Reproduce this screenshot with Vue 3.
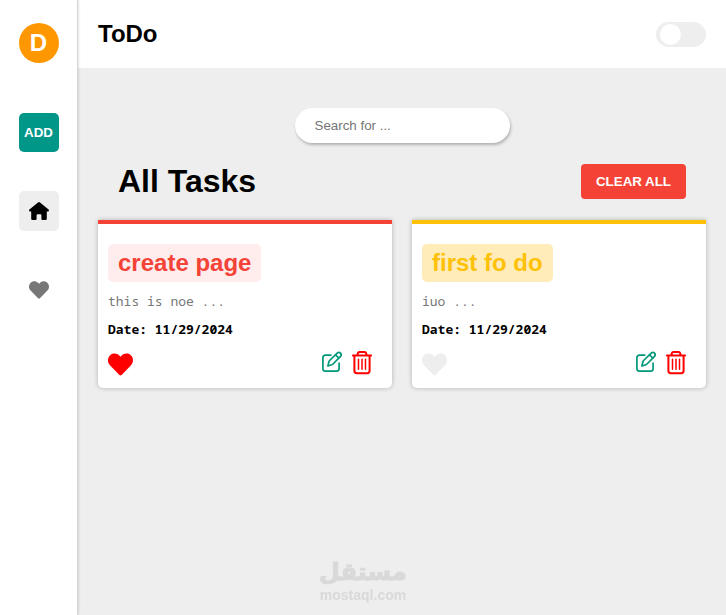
<script setup>
import { ref, computed } from 'vue'

const search = ref('')
const dark = ref(false)
const tasks = ref([
  { id: 1, title: 'create page', text: 'this is noe ...', date: '11/29/2024', tone: 'red', liked: true },
  { id: 2, title: 'first fo do', text: 'iuo ...', date: '11/29/2024', tone: 'amber', liked: false },
])
const shown = computed(() => tasks.value.filter((t) => t.title.includes(search.value)))
const remove = (id) => {
  tasks.value = tasks.value.filter((t) => t.id !== id)
}
const heart =
  'M462.3 62.6C407.5 15.9 326 24.3 275.7 76.2L256 96.5l-19.7-20.3C186.1 24.3 104.5 15.9 49.7 62.6c-62.8 53.6-66.1 149.8-9.9 207.9l193.5 199.8c12.5 12.9 32.8 12.9 45.3 0l193.5-199.8c56.3-58.1 53-154.3-9.8-207.9z'
</script>

<template>
  <div class="page">
    <aside class="sidebar">
      <div class="avatar">D</div>
      <button class="add" type="button">ADD</button>
      <nav class="nav">
        <a class="nav-link active" href="#home" aria-label="Home">
          <svg width="20" height="18" viewBox="0 0 20 18">
            <path d="M9 .5Q10-.3 11 .5L19.6 7.5Q20.2 8.2 19.8 9Q19.4 9.6 18.6 9.6H17.8V16.8Q17.8 18 16.6 18H13.4Q12.4 18 12.4 17V13.2Q12.4 12.2 11.4 12.2H8.6Q7.6 12.2 7.6 13.2V17Q7.6 18 6.6 18H3.4Q2.2 18 2.2 16.8V9.6H1.4Q.6 9.6 .2 9Q-.2 8.2 .4 7.5Z" />
          </svg>
        </a>
        <a class="nav-link" href="#favorites" aria-label="Favorites">
          <svg width="20" height="20" viewBox="0 0 512 512"><path :d="heart" /></svg>
        </a>
      </nav>
    </aside>

    <div class="main">
      <header class="header">
        <h2 class="brand">ToDo</h2>
        <input v-model="dark" class="switch" type="checkbox" role="switch" aria-label="Dark mode" />
      </header>

      <main class="content">
        <input v-model="search" class="search" type="text" placeholder="Search for ..." aria-label="Search tasks" />
        <div class="toolbar">
          <h1 class="heading">All Tasks</h1>
          <button class="clear" type="button" @click="tasks = []">CLEAR ALL</button>
        </div>

        <section class="grid">
          <article v-for="task in shown" :key="task.id" class="card" :class="task.tone">
            <h2 class="title">{{ task.title }}</h2>
            <p class="text">{{ task.text }}</p>
            <p class="date">Date: {{ task.date }}</p>
            <div class="actions">
              <button class="icon like" :class="{ liked: task.liked }" type="button" aria-label="Favorite" @click="task.liked = !task.liked">
                <svg width="25" height="25" viewBox="0 0 512 512"><path :d="heart" /></svg>
              </button>
              <div class="tools">
                <button class="icon edit" type="button" aria-label="Edit">
                  <svg width="21" height="24" viewBox="0 0 21 24">
                    <path d="M8.8 4.1H3.6Q.9 4.1 .9 6.8V17.4Q.9 20.1 3.6 20.1H14.4Q17.1 20.1 17.1 17.4V12.2" />
                    <path d="M5.9 15L6.9 10.7Q7.1 10 7.6 9.5L15.2 2.1Q17 .7 18.5 2.1Q20 3.7 18.5 5.4L11 13Q10.5 13.5 9.8 13.8Z" />
                    <path d="M13.6 3.9L16.7 7" />
                  </svg>
                </button>
                <button class="icon trash" type="button" aria-label="Delete" @click="remove(task.id)">
                  <svg width="20" height="24" viewBox="0 0 20 24">
                    <path d="M.9 4.6H19.1M5.4 4.4Q5.6 1 7.6 1H12.4Q14.4 1 14.6 4.4" />
                    <path d="M2.4 5V19.8Q2.4 22.2 4.8 22.2H15.2Q17.6 22.2 17.6 19.8V5" />
                    <path class="thin" d="M6.5 8.3V18.3M10 8.3V18.3M13.5 8.3V18.3" />
                  </svg>
                </button>
              </div>
            </div>
          </article>
        </section>
      </main>
    </div>

    <div class="watermark">
      <span class="mark-ar" lang="ar">مستقل</span>
      <span class="mark-en">mostaql.com</span>
    </div>
  </div>
</template>

<style>
body {
  margin: 0;
}
</style>

<style scoped>
* {
  box-sizing: border-box;
  margin: 0;
}
.page {
  display: flex;
  min-height: 100vh;
  background: #eee;
  color: #000;
  font-family: "Liberation Sans", Arial, sans-serif;
}
button {
  border: 0;
  padding: 0;
  cursor: pointer;
  font-family: "Liberation Sans", Arial, sans-serif;
  font-weight: bold;
  line-height: 15px;
}
.sidebar {
  flex: none;
  z-index: 1;
  display: flex;
  flex-direction: column;
  align-items: center;
  width: 78px;
  padding-top: 23px;
  background: #fff;
  border-right: 1px solid #d6d6d6;
  box-shadow: 0 0 3px rgba(0, 0, 0, 0.2);
}
.avatar {
  width: 40px;
  height: 40px;
  margin-bottom: 50px;
  border-radius: 50%;
  background: #ff9800;
  color: #fff;
  font-size: 24px;
  font-weight: bold;
  line-height: 40px;
  text-align: center;
}
.add {
  width: 40px;
  height: 39px;
  margin-bottom: 39px;
  border-radius: 5px;
  background: #009688;
  color: #fff;
}
.nav {
  display: flex;
  flex-direction: column;
  gap: 39px;
}
.nav-link {
  display: flex;
  align-items: center;
  justify-content: center;
  width: 40px;
  height: 40px;
  border-radius: 5px;
  fill: #777;
}
.nav-link.active {
  background: #eee;
  fill: #000;
}
.main {
  flex: 1;
  min-width: 0;
}
.header {
  display: flex;
  align-items: center;
  justify-content: space-between;
  height: 68px;
  padding: 0 20px;
  background: #fff;
}
.brand {
  font-size: 24px;
  line-height: 28px;
}
.switch {
  appearance: none;
  display: flex;
  align-items: center;
  width: 50px;
  height: 25px;
  padding: 0 4px;
  border-radius: 25px;
  background: #eee;
  cursor: pointer;
}
.switch::before {
  content: "";
  width: 21px;
  height: 21px;
  border-radius: 50%;
  background: #fff;
}
.switch:checked {
  justify-content: flex-end;
  background: #009688;
}
.content {
  padding: 40px 20px 20px;
}
.search {
  display: block;
  width: 215px;
  height: 35px;
  margin: 0 auto 20px;
  padding: 0 20px;
  border: 0;
  border-radius: 25px;
  outline: 0;
  background: #fff;
  box-shadow: 1px 2px 3px rgba(0, 0, 0, 0.25);
  font-family: "Liberation Sans", Arial, sans-serif;
}
.search::placeholder {
  color: #757575;
}
.toolbar {
  display: flex;
  align-items: center;
  justify-content: space-between;
  padding: 0 20px;
  margin-bottom: 20px;
}
.heading {
  font-size: 32px;
  line-height: 37px;
}
.clear {
  padding: 10px 15px;
  border-radius: 4px;
  background: #f44336;
  color: #fff;
}
.grid {
  display: grid;
  grid-template-columns: repeat(auto-fill, minmax(250px, 1fr));
  gap: 20px;
}
.card {
  display: flex;
  flex-direction: column;
  align-items: flex-start;
  padding: 20px 10px 11px;
  border-top: 4px solid;
  border-radius: 0 0 5px 5px;
  background: #fff;
  box-shadow: 0 0 5px rgba(0, 0, 0, 0.25);
}
.title {
  padding: 5px 10px;
  border-radius: 5px;
  font-size: 24px;
  line-height: 28px;
}
.red {
  border-color: #f44336;
}
.red .title {
  background: #ffeded;
  color: #f44336;
}
.amber {
  border-color: #ffc107;
}
.amber .title {
  background: #ffecb8;
  color: #ffc107;
}
.text,
.date {
  margin-top: 10px;
  font: 13px/18px "Noto Sans Mono", "DejaVu Sans Mono", monospace;
}
.text {
  color: #777;
}
.date {
  font-weight: bold;
}
.actions {
  display: flex;
  align-items: flex-start;
  justify-content: space-between;
  width: 100%;
  margin-top: 13px;
  padding-right: 10px;
}
.icon {
  display: flex;
  background: none;
}
.icon svg {
  overflow: visible;
}
.like {
  padding-top: 1px;
  fill: #eee;
}
.like.liked {
  fill: #f00;
}
.tools {
  display: flex;
  align-items: center;
  gap: 9px;
}
.edit,
.trash {
  fill: none;
  stroke-linecap: round;
  stroke-linejoin: round;
}
.edit {
  stroke: #009879;
  stroke-width: 1.7;
}
.trash {
  stroke: #f00;
  stroke-width: 2;
}
.thin {
  stroke-width: 1.5;
}
.watermark {
  position: fixed;
  left: 50%;
  bottom: 12px;
  display: flex;
  flex-direction: column;
  align-items: center;
  transform: translateX(-50%);
  color: #d9d9d9;
  font-weight: bold;
  pointer-events: none;
}
.mark-ar {
  font-family: "DejaVu Sans", sans-serif;
  font-size: 24px;
  line-height: 30px;
  -webkit-text-stroke: 1px #d9d9d9;
}
.mark-en {
  font-size: 14px;
  line-height: 16px;
}
</style>
